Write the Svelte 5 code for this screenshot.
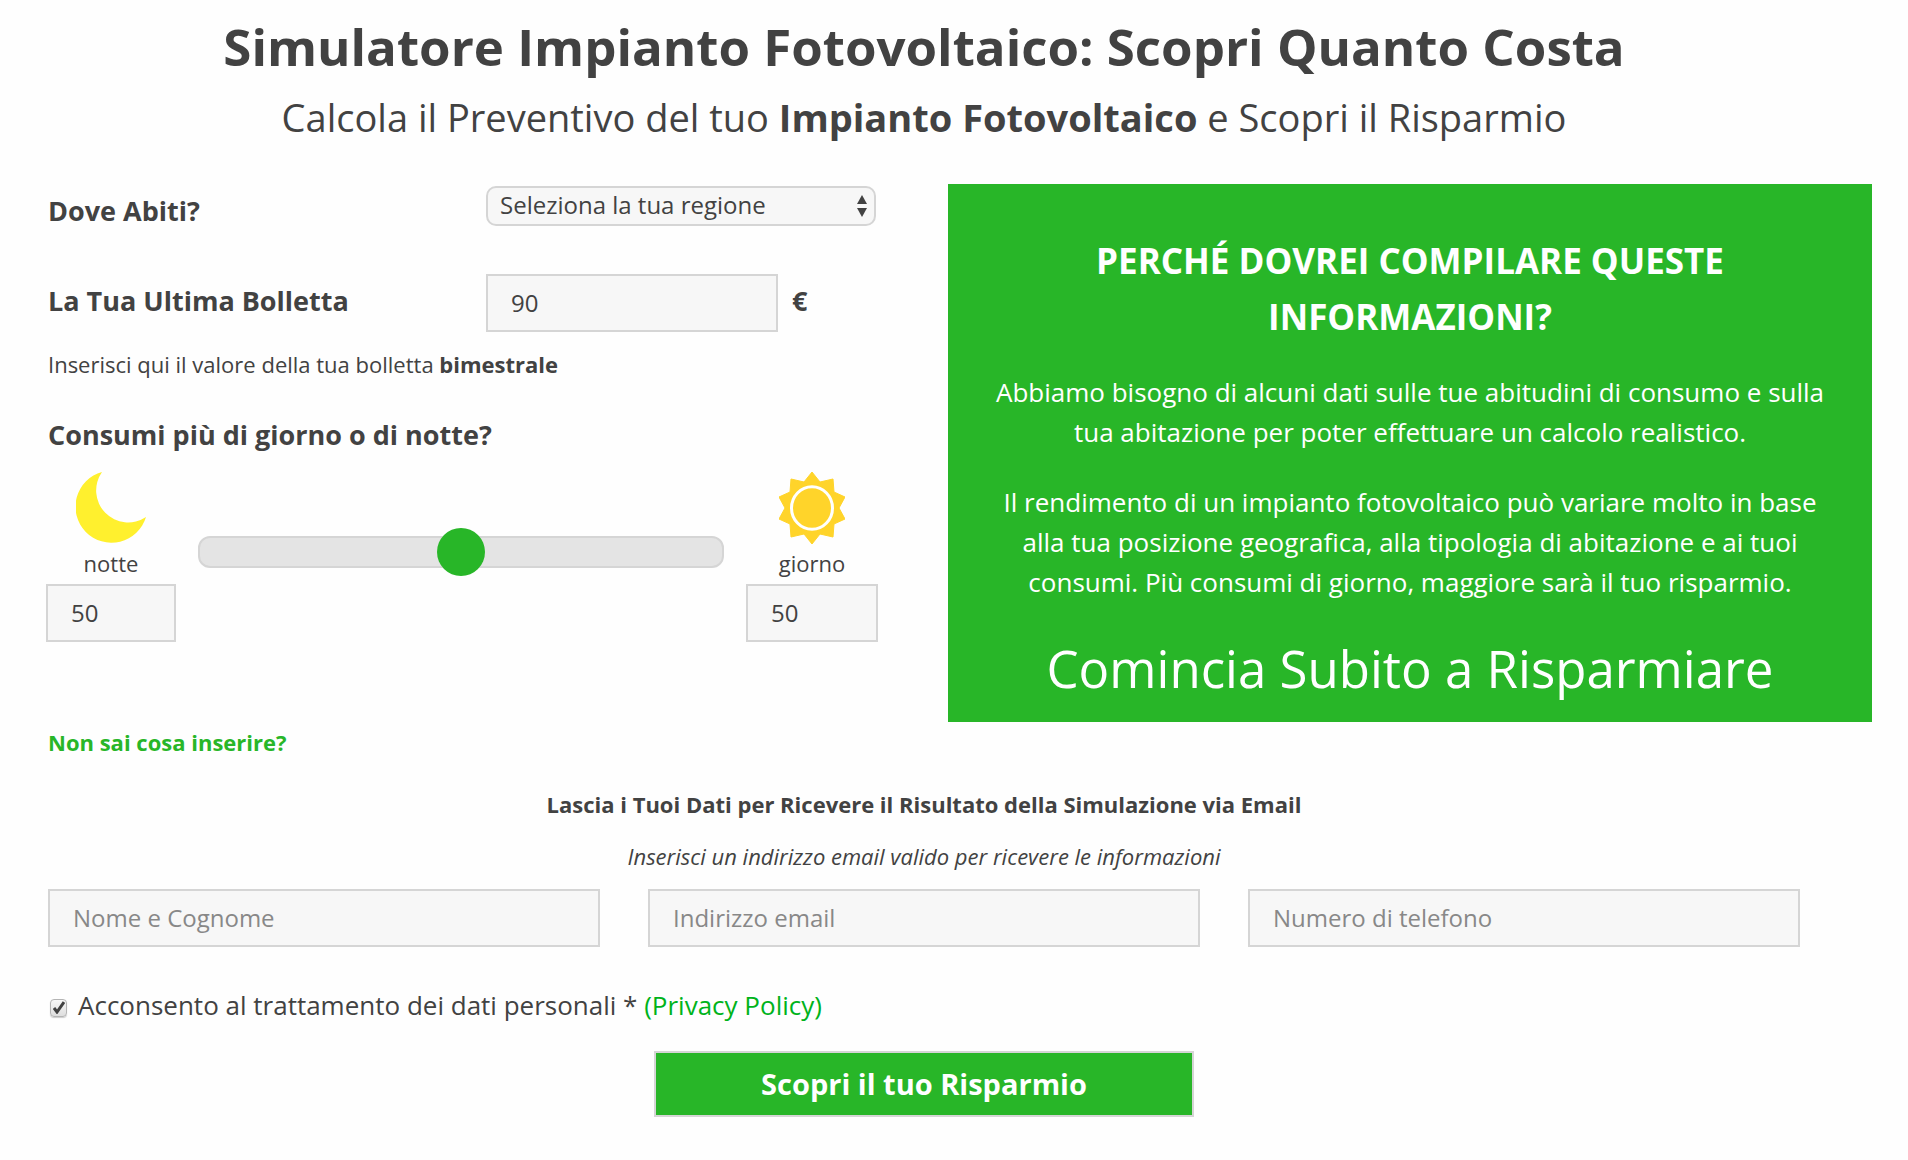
<script lang="ts">
  let regione = $state('');
  let bolletta = $state('90');
  let giorno = $state(50);
  let notte = $derived(100 - giorno);
  let consenso = $state(true);

  const regioni = [
    'Abruzzo', 'Basilicata', 'Calabria', 'Campania', 'Emilia-Romagna', 'Friuli-Venezia Giulia',
    'Lazio', 'Liguria', 'Lombardia', 'Marche', 'Molise', 'Piemonte', 'Puglia', 'Sardegna',
    'Sicilia', 'Toscana', 'Trentino-Alto Adige', 'Umbria', "Valle d'Aosta", 'Veneto'
  ];

  const contatti = [
    { id: 'nome', type: 'text', label: 'Nome e Cognome' },
    { id: 'email', type: 'email', label: 'Indirizzo email' },
    { id: 'telefono', type: 'tel', label: 'Numero di telefono' }
  ];

  // I due valori sommano sempre a 100
  function setNotte(e: Event) {
    giorno = 100 - Number((e.target as HTMLInputElement).value);
  }
  function setGiorno(e: Event) {
    giorno = Number((e.target as HTMLInputElement).value);
  }
</script>

<main class="page">
  <header class="intro">
    <h1>Simulatore Impianto Fotovoltaico: Scopri Quanto Costa</h1>
    <p class="subtitle">Calcola il Preventivo del tuo <strong>Impianto Fotovoltaico</strong> e Scopri il Risparmio</p>
  </header>

  <form onsubmit={(e) => e.preventDefault()}>
    <div class="columns">
      <section class="consumi">
        <div class="field">
          <label class="field__label" for="regione">Dove Abiti?</label>
          <div class="select">
            <select id="regione" bind:value={regione}>
              <option value="">Seleziona la tua regione</option>
              {#each regioni as r}
                <option value={r}>{r}</option>
              {/each}
            </select>
            <svg class="select__arrows" width="10" height="22" viewBox="0 0 10 22" fill="currentColor"><path d="M5 0l5 9H0z"/><path d="M5 22l5-9H0z"/></svg>
          </div>
        </div>

        <div class="field field--bolletta">
          <label class="field__label" for="bolletta">La Tua Ultima Bolletta</label>
          <div class="field__control">
            <input class="input input--euro" id="bolletta" type="text" inputmode="numeric" bind:value={bolletta} />
            <span class="field__label">€</span>
          </div>
        </div>
        <p class="hint">Inserisci qui il valore della tua bolletta <strong>bimestrale</strong></p>

        <h2 id="ripartizione">Consumi più di giorno o di notte?</h2>
        <div class="split">
          <div class="split__side">
            <svg width="70" height="72" viewBox="0 0 70 72" fill="#fff02e"><path d="M26 0A36 36 0 1 0 70 45A32 32 0 0 1 26 0z"/></svg>
            <label for="notte">notte</label>
            <input class="input" id="notte" type="text" inputmode="numeric" value={notte} onchange={setNotte} />
          </div>
          <input class="slider" type="range" min="0" max="100" bind:value={giorno} aria-labelledby="ripartizione" />
          <div class="split__side">
            <svg width="66" height="72" viewBox="0 0 66 72">
              <path fill="#ffd42a" stroke="#ffd42a" stroke-linejoin="round" d="M33 0L41 10L54 7L55 20L66 25L60 36L66 47L55 52L54 65L41 62L33 72L25 62L12 65L11 52L0 47L6 36L0 25L11 20L12 7L25 10z"/>
              <ellipse cx="33" cy="36" rx="20.5" ry="21.3" fill="none" stroke="#fff" stroke-width="3"/>
            </svg>
            <label for="giorno">giorno</label>
            <input class="input" id="giorno" type="text" inputmode="numeric" value={giorno} onchange={setGiorno} />
          </div>
        </div>

        <a class="help" href="#aiuto">Non sai cosa inserire?</a>
      </section>

      <aside class="box">
        <h2 class="box__title">Perché dovrei compilare queste informazioni?</h2>
        <p>Abbiamo bisogno di alcuni dati sulle tue abitudini di consumo e sulla tua abitazione per poter effettuare un calcolo realistico.</p>
        <p>Il rendimento di un impianto fotovoltaico può variare molto in base alla tua posizione geografica, alla tipologia di abitazione e ai tuoi consumi. Più consumi di giorno, maggiore sarà il tuo risparmio.</p>
        <p class="box__cta">Comincia Subito a Risparmiare</p>
      </aside>
    </div>

    <section class="dati">
      <h3>Lascia i Tuoi Dati per Ricevere il Risultato della Simulazione via Email</h3>
      <p class="dati__note">Inserisci un indirizzo email valido per ricevere le informazioni</p>
      <div class="dati__fields">
        {#each contatti as c}
          <input class="input" id={c.id} name={c.id} type={c.type} placeholder={c.label} aria-label={c.label} />
        {/each}
      </div>
      <div class="privacy">
        <span class="check">
          <input id="consenso" type="checkbox" bind:checked={consenso} />
          {#if consenso}
            <svg class="check__mark" width="12" height="13" viewBox="0 0 12 13" fill="none" stroke="#424242" stroke-width="3"><path d="M1 7l3 4L11 1"/></svg>
          {/if}
        </span>
        <span><label for="consenso">Acconsento al trattamento dei dati personali *</label> <a href="#privacy">(Privacy Policy)</a></span>
      </div>
      <button class="submit" type="submit">Scopri il tuo Risparmio</button>
    </section>
  </form>
</main>

<style>
  :global(body) { margin: 0; background: #fefefe; }

  .page {
    --green: #28b628;
    --ink: #424242;
    --line: #d5d5d5;
    --field: #f7f7f7;
    padding: 16px 36px 40px 24px;
    font-family: 'Open Sans', sans-serif;
    font-size: 22px;
    line-height: 30px;
    color: var(--ink);
  }
  h1, h2, h3, p { margin: 0; }
  input, select, button { font-family: inherit; color: inherit; box-sizing: border-box; }

  .intro { padding: 0 72px 0 24px; text-align: center; }
  h1 { font-size: 51px; line-height: 60px; }
  .subtitle { margin-top: 13px; font-size: 38px; line-height: 56px; }

  .columns { display: grid; grid-template-columns: 1fr 1fr; align-items: start; margin-top: 39px; }
  .consumi { padding: 0 72px 0 24px; }

  .field { display: grid; grid-template-columns: 438px 1fr; align-items: start; }
  .field--bolletta { margin-top: 36px; }
  .field__label { font-size: 27px; font-weight: 700; line-height: 54px; }
  .field__control { display: flex; gap: 14px; }

  .select { position: relative; margin-top: 2px; }
  .select select {
    display: block; width: 100%; height: 40px; padding: 0 32px 4px 12px;
    appearance: none; border: 2px solid var(--line); border-radius: 10px;
    background: var(--field); font-size: 24px;
  }
  .select__arrows { position: absolute; right: 9px; top: 9px; pointer-events: none; }

  .input {
    width: 100%; height: 58px; padding: 0 23px 2px;
    border: 2px solid var(--line); border-radius: 0;
    background: var(--field); font-size: 24px;
  }
  .input::placeholder { color: #888; opacity: 1; }
  .input--euro { width: 292px; }

  .hint { margin-top: 17px; }
  .consumi h2 { margin-top: 36px; font-size: 27px; line-height: 40px; }

  .split {
    display: grid; grid-template-columns: 130px 1fr 132px; column-gap: 22px;
    align-items: start; margin: 17px -2px 0;
  }
  .split__side { display: flex; flex-direction: column; align-items: center; }
  .split__side label { margin: 4px 0 6px; }
  .slider { width: 100%; height: 48px; margin: 56px 0 0; appearance: none; background: none; }
  .slider::-webkit-slider-runnable-track {
    height: 32px; box-sizing: border-box;
    border: 2px solid var(--line); border-radius: 12px; background: #e4e4e4;
  }
  .slider::-webkit-slider-thumb {
    width: 48px; height: 48px; margin-top: -10px;
    appearance: none; border-radius: 50%; background: var(--green);
  }
  .help { display: inline-block; margin-top: 85px; color: var(--green); font-weight: 700; text-decoration: none; }

  .box { padding: 49px 44px 18px; background: var(--green); color: #fff; text-align: center; }
  .box__title { font-size: 35px; line-height: 56px; text-transform: uppercase; }
  .box p { margin-top: 30px; font-size: 26px; font-weight: 500; line-height: 40px; }
  .box__title + p { margin-top: 27px; }
  .box .box__cta { font-size: 51px; line-height: 72px; }

  .dati { padding: 0 72px 0 24px; margin-top: 32px; text-align: center; }
  .dati h3 { font-size: 22px; }
  .dati__note { margin-top: 22px; font-style: italic; }
  .dati__fields { display: grid; grid-template-columns: repeat(3, 1fr); gap: 48px; margin-top: 18px; }

  .privacy { display: flex; align-items: center; gap: 11px; margin-top: 38px; font-size: 26px; line-height: 40px; }
  .privacy a { color: #00b31b; text-decoration: none; }
  .check { position: relative; display: flex; margin: 5px 0 0 2px; }
  .check input {
    width: 17px; height: 18px; margin: 0; appearance: none;
    border: 1px solid #b4b4b4; border-radius: 4px;
    background: linear-gradient(#f8f8f8, #dedede);
    box-shadow: 0 1px 1px #ccc;
  }
  .check__mark { position: absolute; left: 3px; top: 2px; pointer-events: none; }

  .submit {
    width: 540px; height: 66px; margin-top: 26px; padding: 0 0 2px;
    border: 2px solid var(--line); background: var(--green); color: #fff;
    font-size: 29px; font-weight: 700; cursor: pointer;
  }
</style>
